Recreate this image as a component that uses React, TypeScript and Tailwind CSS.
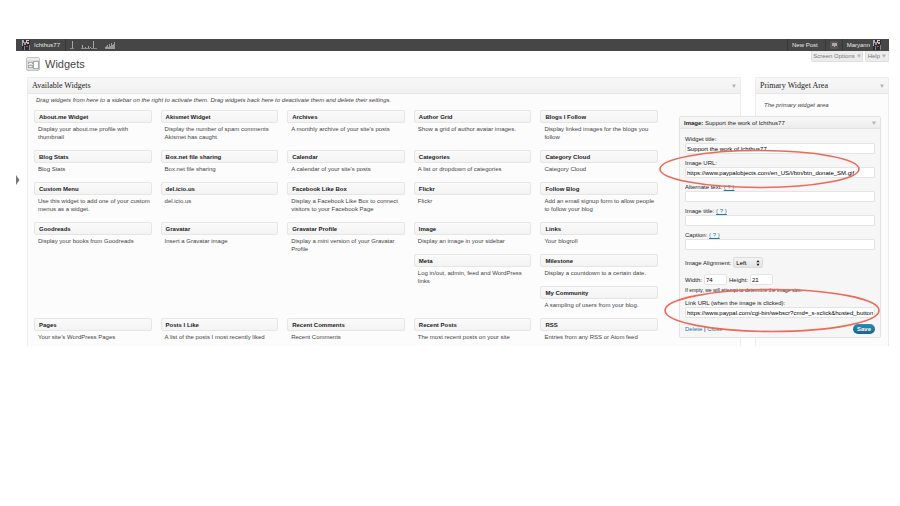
import type { ReactNode } from 'react';

type Widget = {
    name: string;
    description: string;
    place?: string;
};

const widgets: Widget[] = [
    { name: 'About.me Widget', description: 'Display your about.me profile with thumbnail' },
    { name: 'Akismet Widget', description: 'Display the number of spam comments Akismet has caught' },
    { name: 'Archives', description: 'A monthly archive of your site’s posts' },
    { name: 'Author Grid', description: 'Show a grid of author avatar images.' },
    { name: 'Blogs I Follow', description: 'Display linked images for the blogs you follow' },
    { name: 'Blog Stats', description: 'Blog Stats' },
    { name: 'Box.net file sharing', description: 'Box.net file sharing' },
    { name: 'Calendar', description: 'A calendar of your site’s posts' },
    { name: 'Categories', description: 'A list or dropdown of categories' },
    { name: 'Category Cloud', description: 'Category Cloud' },
    { name: 'Custom Menu', description: 'Use this widget to add one of your custom menus as a widget.' },
    { name: 'del.icio.us', description: 'del.icio.us' },
    { name: 'Facebook Like Box', description: 'Display a Facebook Like Box to connect visitors to your Facebook Page' },
    { name: 'Flickr', description: 'Flickr' },
    { name: 'Follow Blog', description: 'Add an email signup form to allow people to follow your blog' },
    { name: 'Goodreads', description: 'Display your books from Goodreads' },
    { name: 'Gravatar', description: 'Insert a Gravatar image' },
    { name: 'Gravatar Profile', description: 'Display a mini version of your Gravatar Profile', place: 'row-span-2' },
    { name: 'Image', description: 'Display an image in your sidebar' },
    { name: 'Links', description: 'Your blogroll' },
    { name: 'Meta', description: 'Log in/out, admin, feed and WordPress links', place: 'col-start-4 row-span-2' },
    { name: 'Milestone', description: 'Display a countdown to a certain date.' },
    { name: 'My Community', description: 'A sampling of users from your blog.', place: 'col-start-5' },
    { name: 'Pages', description: 'Your site’s WordPress Pages', place: 'col-start-1' },
    { name: 'Posts I Like', description: 'A list of the posts I most recently liked' },
    { name: 'Recent Comments', description: 'Recent Comments' },
    { name: 'Recent Posts', description: 'The most recent posts on your site' },
    { name: 'RSS', description: 'Entries from any RSS or Atom feed' },
];

const inputClass =
    'block h-[11px] rounded-[2px] border border-[#e4e4e4] bg-white px-px text-[6px] leading-[8px] text-black outline-none';

function Arrow() {
    return (
        <svg viewBox="0 0 4 4" className="size-1 shrink-0" aria-hidden="true">
            <path d="M0 0.5h4L2 4z" fill="#b4b4b4" />
        </svg>
    );
}

function Avatar() {
    return (
        <svg viewBox="0 0 8 10" className="h-[10px] w-2 shrink-0" aria-hidden="true">
            <rect width="8" height="10" fill="#2e2a30" />
            <path d="M0 0h2v3H1v3H0z" fill="#9fb2cc" />
            <path d="M4 0h3v1H5v2H4z" fill="#c9cdd6" />
            <path d="M2 2h2v3H2z" fill="#b58a80" />
            <path d="M5 2h2v2H5z" fill="#d8b0a6" />
            <path d="M2 6h1v4H2zM7 5h1v5H7z" fill="#6f86a6" />
            <path d="M4 6h2v1H4z" fill="#8c5f60" />
        </svg>
    );
}

function Sparkline() {
    return (
        <svg viewBox="0 0 46 10" className="h-[10px] w-[46px]" aria-hidden="true">
            <path d="M2 1h1v7H2zM12 5h1v3h-1zM15 7h1v1h-1zM18 6h1v2h-1zM20 7h1v1h-1zM23 1h1v7h-1z" fill="#a5a5a5" />
            <path d="M0 8h4v1H0zM11 8h9v1h-9zM21 8h6v1h-6z" fill="#8c8c8c" />
            <path d="M35 9V7h1V6h1V5h1v2h1V4h1v2h1V3h1v2h1V4h1V2h1v7z" fill="#999" />
        </svg>
    );
}

function PanelHeader({ title }: { title: string }) {
    return (
        <div className="flex h-4 items-center justify-between rounded-t-[2px] border-b border-[#e6e6e6] bg-linear-to-b from-[#f8f8f8] to-[#f0f0f0] px-1">
            <h2 className="font-['Liberation_Serif',serif] text-[8px] leading-[10px] text-[#222]">{title}</h2>
            <Arrow />
        </div>
    );
}

function Field({ id, label, value, help }: { id: string; label: string; value?: string; help?: boolean }) {
    return (
        <div>
            <div className="h-2">
                <label htmlFor={id}>{label}</label>
                {help && (
                    <>
                        {' '}
                        <a href="#help" className="text-[#21759b] underline">
                            ( ? )
                        </a>
                    </>
                )}
            </div>
            <input id={id} type="text" defaultValue={value} className={`${inputClass} w-full`} />
        </div>
    );
}

function BarItem({ children }: { children: ReactNode }) {
    return <div className="flex h-full items-center border-l border-[#383838] px-1">{children}</div>;
}

function AdminBar() {
    return (
        <header className="flex h-3 items-center justify-between bg-[#464646] text-[6px] leading-[8px] text-[#e8e8e8]">
            <div className="flex h-full items-center">
                <a href="#site" className="flex h-full items-center gap-1 border-r border-[#383838] pr-[5px] pl-[6px]">
                    <Avatar />
                    Ichthus77
                </a>
                <div className="pl-1">
                    <Sparkline />
                </div>
            </div>
            <div className="flex h-full items-center pr-[8px]">
                <BarItem>
                    <a href="#new" className="pr-[3px]">
                        New Post
                    </a>
                </BarItem>
                <BarItem>
                    <svg viewBox="0 0 8 8" className="size-2" role="img" aria-label="Notifications">
                        <rect width="8" height="8" rx="1" fill="#565656" />
                        <path d="M2 2h5v3H5v1H4V5H2z" fill="#a9a9a9" />
                    </svg>
                </BarItem>
                <div className="flex h-full items-center border-l border-[#383838] pl-1">
                    <a href="#profile" className="flex items-center gap-[3px]">
                        Maryann
                        <Avatar />
                    </a>
                </div>
            </div>
        </header>
    );
}

function ImageWidget() {
    return (
        <section className="relative mt-[4px] mr-[7px] ml-[-77px] rounded-[2px] border border-[#e3e3e3] bg-[#f6f6f6] text-[6px] leading-[8px] text-[#222]">
            <div className="flex h-3 items-center justify-between border-b border-[#e3e3e3] bg-linear-to-b from-[#f8f8f8] to-[#ececec] px-1">
                <h3>
                    <b>Image:</b> Support the work of Ichthus77
                </h3>
                <Arrow />
            </div>
            <form className="px-[5px] pt-[6px] pb-[3px]" onSubmit={(e) => e.preventDefault()}>
                <div className="flex flex-col gap-[5px]">
                    <Field id="title" label="Widget title:" value="Support the work of Ichthus77" />
                    <Field
                        id="image-url"
                        label="Image URL:"
                        value="https://www.paypalobjects.com/en_US/i/btn/btn_donate_SM.gif"
                    />
                    <Field id="alt" label="Alternate text:" help />
                    <Field id="image-title" label="Image title:" help />
                    <Field id="caption" label="Caption:" help />
                </div>
                <div className="mt-[7px] flex items-center gap-[2px]">
                    <label htmlFor="align">Image Alignment:</label>
                    <div className="relative">
                        <select
                            id="align"
                            defaultValue="Left"
                            className="block h-[11px] w-[30px] appearance-none rounded-[2px] border border-[#dcdcdc] bg-linear-to-b from-[#f4f4f4] to-[#e4e4e4] px-[2px] text-[6px] leading-[8px] text-black"
                        >
                            <option>None</option>
                            <option>Left</option>
                            <option>Center</option>
                            <option>Right</option>
                        </select>
                        <svg
                            viewBox="0 0 4 6"
                            className="pointer-events-none absolute top-[3px] right-[3px] h-[6px] w-1"
                            aria-hidden="true"
                        >
                            <path d="M2 0l1.6 2.3H.4zM2 6l1.6-2.3H.4z" fill="#222" />
                        </svg>
                    </div>
                </div>
                <div className="mt-[6px] flex items-center gap-[2px]">
                    <label htmlFor="width">Width:</label>
                    <input id="width" type="text" defaultValue="74" className={`${inputClass} w-[23px]`} />
                    <label htmlFor="height">Height:</label>
                    <input id="height" type="text" defaultValue="21" className={`${inputClass} w-[23px]`} />
                </div>
                <p className="mt-px mb-[5px] text-[5px]">If empty, we will attempt to determine the image size.</p>
                <Field
                    id="link-url"
                    label="Link URL (when the image is clicked):"
                    value="https://www.paypal.com/cgi-bin/webscr?cmd=_s-xclick&hosted_button_id"
                />
                <div className="mt-[6px] flex items-center justify-between">
                    <div>
                        <a href="#delete" className="text-[#21759b]">
                            Delete
                        </a>
                        {' | '}
                        <a href="#close" className="text-[#21759b]">
                            Close
                        </a>
                    </div>
                    <button
                        type="submit"
                        className="h-[10px] w-[22px] rounded-full bg-linear-to-b from-[#2a8db8] to-[#1c6485] text-[6px] leading-[10px] font-bold text-white"
                    >
                        Save
                    </button>
                </div>
            </form>
            {/* red marker rings round the two URL fields */}
            <svg
                viewBox="0 0 224 190"
                className="pointer-events-none absolute top-[32px] -left-[22px] h-[190px] w-[224px]"
                fill="none"
                stroke="#ec6a5a"
                strokeWidth="1.6"
                aria-hidden="true"
            >
                <ellipse cx="101.5" cy="20" rx="99.5" ry="18.5" />
                <ellipse cx="114" cy="161.5" rx="107" ry="21" />
            </svg>
        </section>
    );
}

export default function App() {
    return (
        <div className="min-h-screen bg-white pt-[39px] pr-[11px] pl-4 font-['Liberation_Sans',Arial,sans-serif] text-[6px] leading-[8px] text-[#333]">
            <AdminBar />
            <div className="flex">
                <div className="w-[11px] shrink-0 pt-[124px]">
                    <svg viewBox="0 0 4 10" className="h-[10px] w-1" aria-hidden="true">
                        <path d="M0 0l3.5 5L0 10z" fill="#777" />
                    </svg>
                </div>
                <div className="min-w-0 flex-1">
                    <div className="flex h-[26px] items-start justify-between">
                        <div className="flex items-center gap-[5px] pt-[6px]">
                            <svg viewBox="0 0 14 14" className="-ml-px size-[14px]" aria-hidden="true">
                                <rect x=".5" y=".5" width="13" height="13" rx="1.5" fill="#dedede" stroke="#c2c2c2" />
                                <path d="M1 1h12v2H1z" fill="#ececec" />
                                <path d="M2 5h5v2H2zM2 8h5v3H2z" fill="#a9a9a9" />
                                <path d="M3 6h3v1H3zM3 9h3v1H3z" fill="#f4f4f4" />
                                <rect x="7.5" y="4.5" width="5" height="7" fill="#fff" stroke="#a5a5a5" />
                            </svg>
                            <h1 className="text-[11px] leading-[14px] text-[#464646]">Widgets</h1>
                        </div>
                        <div className="flex gap-[2px] text-[#777]">
                            <button
                                type="button"
                                className="flex h-[11px] items-center gap-[2px] rounded-b-[2px] border border-t-0 border-[#dedede] bg-[#ececec] px-px"
                            >
                                Screen Options <Arrow />
                            </button>
                            <button
                                type="button"
                                className="flex h-[11px] items-center gap-[2px] rounded-b-[2px] border border-t-0 border-[#dedede] bg-[#ececec] px-[2px]"
                            >
                                Help <Arrow />
                            </button>
                        </div>
                    </div>
                    <div className="flex gap-[14px]">
                        <section className="min-w-0 flex-1 rounded-t-[2px] border border-b-0 border-[#ececec] bg-[#fcfcfc]">
                            <PanelHeader title="Available Widgets" />
                            <p className="pt-[2px] pl-2 text-[#444] italic">
                                Drag widgets from here to a sidebar on the right to activate them. Drag widgets back
                                here to deactivate them and delete their settings.
                            </p>
                            <div className="grid grid-cols-5 gap-[9px] pt-[6px] pr-[82px] pb-1 pl-[6px]">
                                {widgets.map((widget) => (
                                    <div key={widget.name} className={widget.place}>
                                        <h3 className="h-[13px] rounded-[2px] border border-[#e6e6e6] bg-linear-to-b from-[#fafafa] to-[#f3f3f3] px-1 leading-[12px] font-bold text-[#222]">
                                            {widget.name}
                                        </h3>
                                        <p className="mt-[2px] pl-1 text-[#444]">{widget.description}</p>
                                    </div>
                                ))}
                            </div>
                        </section>
                        <aside className="w-[134px] shrink-0 rounded-t-[2px] border border-b-0 border-[#ececec] bg-[#fcfcfc] pb-2">
                            <PanelHeader title="Primary Widget Area" />
                            <p className="pt-[7px] pb-[3px] pl-2 text-[#444] italic">The primary widget area</p>
                            <ImageWidget />
                        </aside>
                    </div>
                </div>
            </div>
        </div>
    );
}
